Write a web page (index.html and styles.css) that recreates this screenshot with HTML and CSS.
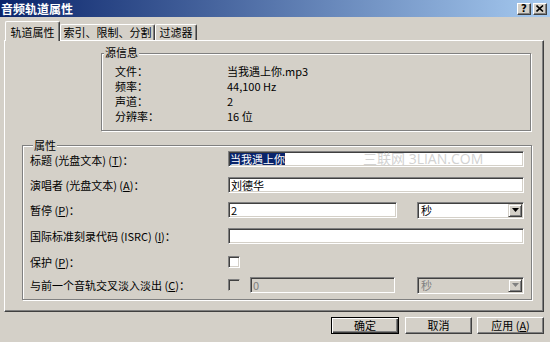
FILE: index.html
```html
<!DOCTYPE html>
<html lang="zh-CN">
<head>
<meta charset="utf-8">
<title>音频轨道属性</title>
<link rel="stylesheet" href="styles.css">
</head>
<body>
<div class="titlebar">
  <span class="title">音频轨道属性</span>
  <div class="tb-buttons">
    <span class="tb-btn q">?</span>
    <span class="tb-btn"><svg width="8" height="7" viewBox="0 0 8 7"><path d="M0.5 0.5 L7 6.5 M7 0.5 L0.5 6.5" stroke="#000" stroke-width="1.6" fill="none"/></svg></span>
  </div>
</div>
<div class="tabs">
  <div class="tab active t1">轨道属性</div>
  <div class="tab t2">索引、限制、分割</div>
  <div class="tab t3">过滤器</div>
</div>
<div class="panel">
  <div class="group src">
    <div class="legend">源信息</div>
    <div class="info">
      <span>文件：</span><span>当我遇上你.mp3</span>
      <span>频率：</span><span>44,100 Hz</span>
      <span>声道：</span><span>2</span>
      <span>分辨率：</span><span>16 位</span>
    </div>
  </div>
  <div class="group props">
    <div class="legend">属性</div>
    <div class="row r1">
      <span class="label">标题 (光盘文本) (<u>T</u>)：</span>
      <div class="field w-full title-field"><span class="sel">当我遇上你</span><span class="watermark">三联网 3LIAN.COM</span></div>
    </div>
    <div class="row r2">
      <span class="label">演唱者 (光盘文本) (<u>A</u>)：</span>
      <div class="field w-full">刘德华</div>
    </div>
    <div class="row r3">
      <span class="label">暂停 (<u>P</u>)：</span>
      <div class="field w-pause">2</div>
      <div class="combo c-pause"><span class="combo-text">秒</span><span class="drop"><svg width="7" height="4" viewBox="0 0 7 4"><polygon points="0,0 7,0 3.5,4" fill="#000"/></svg></span></div>
    </div>
    <div class="row r4">
      <span class="label">国际标准刻录代码 (ISRC) (<u>I</u>)：</span>
      <div class="field w-full"></div>
    </div>
    <div class="row r5">
      <span class="label">保护 (<u>P</u>)：</span>
      <span class="check"></span>
    </div>
    <div class="row r6">
      <span class="label">与前一个音轨交叉淡入淡出 (<u>C</u>)：</span>
      <span class="check disabled"></span>
      <div class="field disabled w-fade">0</div>
      <div class="combo disabled c-fade"><span class="combo-text">秒</span><span class="drop"><svg width="7" height="4" viewBox="0 0 7 4"><polygon points="0,0 7,0 3.5,4" fill="#808080"/></svg></span></div>
    </div>
  </div>
</div>
<div class="buttons">
  <span class="btn default">确定</span>
  <span class="btn">取消</span>
  <span class="btn">应用 (<u>A</u>)</span>
</div>
</body>
</html>
```
FILE: styles.css
```css
* { box-sizing: border-box; }
html, body { margin: 0; padding: 0; }
body {
  width: 550px;
  height: 342px;
  overflow: hidden;
  background: #d4d0c8;
  font-family: "Noto Sans CJK SC", "Noto Sans", sans-serif;
  font-size: 11px;
  color: #000;
}

.titlebar {
  height: 17px;
  background: linear-gradient(to right, #0a246a, #a6caf0);
  display: flex;
  align-items: center;
  justify-content: space-between;
  padding: 0 3px 0 1px;
}
.title {
  color: #fff;
  font-weight: bold;
  font-size: 12px;
  line-height: 17px;
}
.tb-buttons { display: flex; gap: 2px; }
.tb-btn {
  width: 14px;
  height: 12px;
  background: #d4d0c8;
  border-top: 1px solid #fff;
  border-left: 1px solid #fff;
  border-right: 1px solid #404040;
  border-bottom: 1px solid #404040;
  box-shadow: inset -1px -1px 0 #808080;
  display: flex;
  align-items: center;
  justify-content: center;
}
.tb-btn.q {
  font: bold 10px "DejaVu Sans", sans-serif;
  line-height: 10px;
}

.tabs {
  height: 23px;
  display: flex;
  align-items: flex-end;
  padding-left: 5px;
  position: relative;
  z-index: 1;
}
.tab {
  height: 16px;
  border-top: 1px solid #fff;
  border-left: 1px solid #fff;
  border-right: 1px solid #404040;
  box-shadow: inset -1px 0 0 #808080;
  border-radius: 2px 2px 0 0;
  line-height: 15px;
  text-align: center;
  white-space: nowrap;
}
.tab.active {
  height: 20px;
  margin-bottom: -1px;
  padding-top: 2px;
  line-height: 16px;
  background: #d4d0c8;
}
.t1 { width: 55px; }
.t2 { width: 95px; }
.t3 { width: 42px; }

.panel {
  margin-left: 4px;
  width: 540px;
  height: 272px;
  border-top: 1px solid #fff;
  border-left: 1px solid #fff;
  border-right: 1px solid #404040;
  border-bottom: 1px solid #404040;
  box-shadow: inset -1px -1px 0 #808080;
  overflow: hidden;
}

.group {
  border: 1px solid #808080;
  box-shadow: inset 1px 1px 0 #fff, 1px 1px 0 #fff;
}
.legend {
  width: fit-content;
  height: 12px;
  line-height: 12px;
  margin: -8px 0 0 2px;
  padding: 0 1px;
  background: #d4d0c8;
}
.src {
  margin: 12px 0 0 96px;
  width: 430px;
  height: 78px;
}
.info {
  display: grid;
  grid-template-columns: 112px 1fr;
  grid-auto-rows: 15px;
  line-height: 15px;
  padding: 6px 0 0 13px;
}

.props {
  margin: 14px 0 0 17px;
  width: 510px;
  height: 155px;
  padding: 2px 0 0 7px;
}
.props .legend { margin: -9px 0 0 3px; }
.row {
  display: flex;
  align-items: center;
  height: 16px;
}
.r1 .label { margin-top: 2px; }
.r2 { margin-top: 10px; }
.r3 { margin-top: 9px; }
.r4 { margin-top: 10px; }
.r5 { margin-top: 10px; }
.r6 { margin-top: 7px; }
.label {
  width: 198px;
  flex: none;
  white-space: nowrap;
  line-height: 14px;
}

.field {
  height: 16px;
  background: #fff;
  border-top: 1px solid #808080;
  border-left: 1px solid #808080;
  border-right: 1px solid #fff;
  border-bottom: 1px solid #fff;
  box-shadow: inset 1px 1px 0 #404040, inset -1px -1px 0 #d4d0c8;
  padding-left: 2px;
  line-height: 14px;
  white-space: nowrap;
  flex: none;
}
.field.disabled {
  background: #d4d0c8;
  color: #808080;
}
.w-full { width: 296px; }
.w-pause { width: 169px; }
.w-fade { width: 145px; margin-left: 10px; }

.title-field {
  position: relative;
  padding-left: 1px;
  padding-top: 1px;
}
.sel {
  display: inline-block;
  background: #0a246a;
  color: #fff;
  line-height: 12px;
  height: 12px;
  vertical-align: top;
}
.watermark {
  position: absolute;
  left: 134px;
  top: -2px;
  font-family: "Open Sans", "Noto Sans CJK SC", sans-serif;
  font-size: 14px;
  line-height: 18px;
  color: #d2d2d2;
}

.combo {
  width: 107px;
  height: 17px;
  flex: none;
  display: flex;
  justify-content: space-between;
  background: #fff;
  border-top: 1px solid #808080;
  border-left: 1px solid #808080;
  border-right: 1px solid #fff;
  border-bottom: 1px solid #fff;
  box-shadow: inset 1px 1px 0 #404040, inset -1px -1px 0 #d4d0c8;
  padding: 1px;
}
.c-pause { margin-left: 20px; }
.c-fade { margin-left: 22px; }
.combo.disabled { background: #d4d0c8; color: #808080; }
.combo-text {
  line-height: 13px;
  padding-left: 2px;
}
.drop {
  width: 14px;
  height: 13px;
  background: #d4d0c8;
  border-top: 1px solid #d4d0c8;
  border-left: 1px solid #d4d0c8;
  border-right: 1px solid #404040;
  border-bottom: 1px solid #404040;
  box-shadow: inset 1px 1px 0 #fff, inset -1px -1px 0 #808080;
  display: flex;
  align-items: center;
  justify-content: center;
}

.check {
  width: 12px;
  height: 12px;
  flex: none;
  background: #fff;
  border-top: 1px solid #808080;
  border-left: 1px solid #808080;
  border-right: 1px solid #fff;
  border-bottom: 1px solid #fff;
  box-shadow: inset 1px 1px 0 #404040, inset -1px -1px 0 #d4d0c8;
}
.check.disabled {
  background: #d4d0c8;
  border-right-color: #d4d0c8;
  border-bottom-color: #d4d0c8;
}

.buttons {
  display: flex;
  justify-content: flex-end;
  gap: 5px;
  padding-right: 6px;
  margin-top: 5px;
}
.btn {
  width: 67px;
  height: 17px;
  background: #d4d0c8;
  border-top: 1px solid #fff;
  border-left: 1px solid #fff;
  border-right: 1px solid #404040;
  border-bottom: 1px solid #404040;
  box-shadow: inset -1px -1px 0 #808080;
  text-align: center;
  line-height: 15px;
}
.btn.default {
  width: 68px;
  margin-right: 1px;
  border: 1px solid #000;
  box-shadow: inset 1px 1px 0 #fff, inset -1px -1px 0 #404040, inset -2px -2px 0 #808080;
}
```
